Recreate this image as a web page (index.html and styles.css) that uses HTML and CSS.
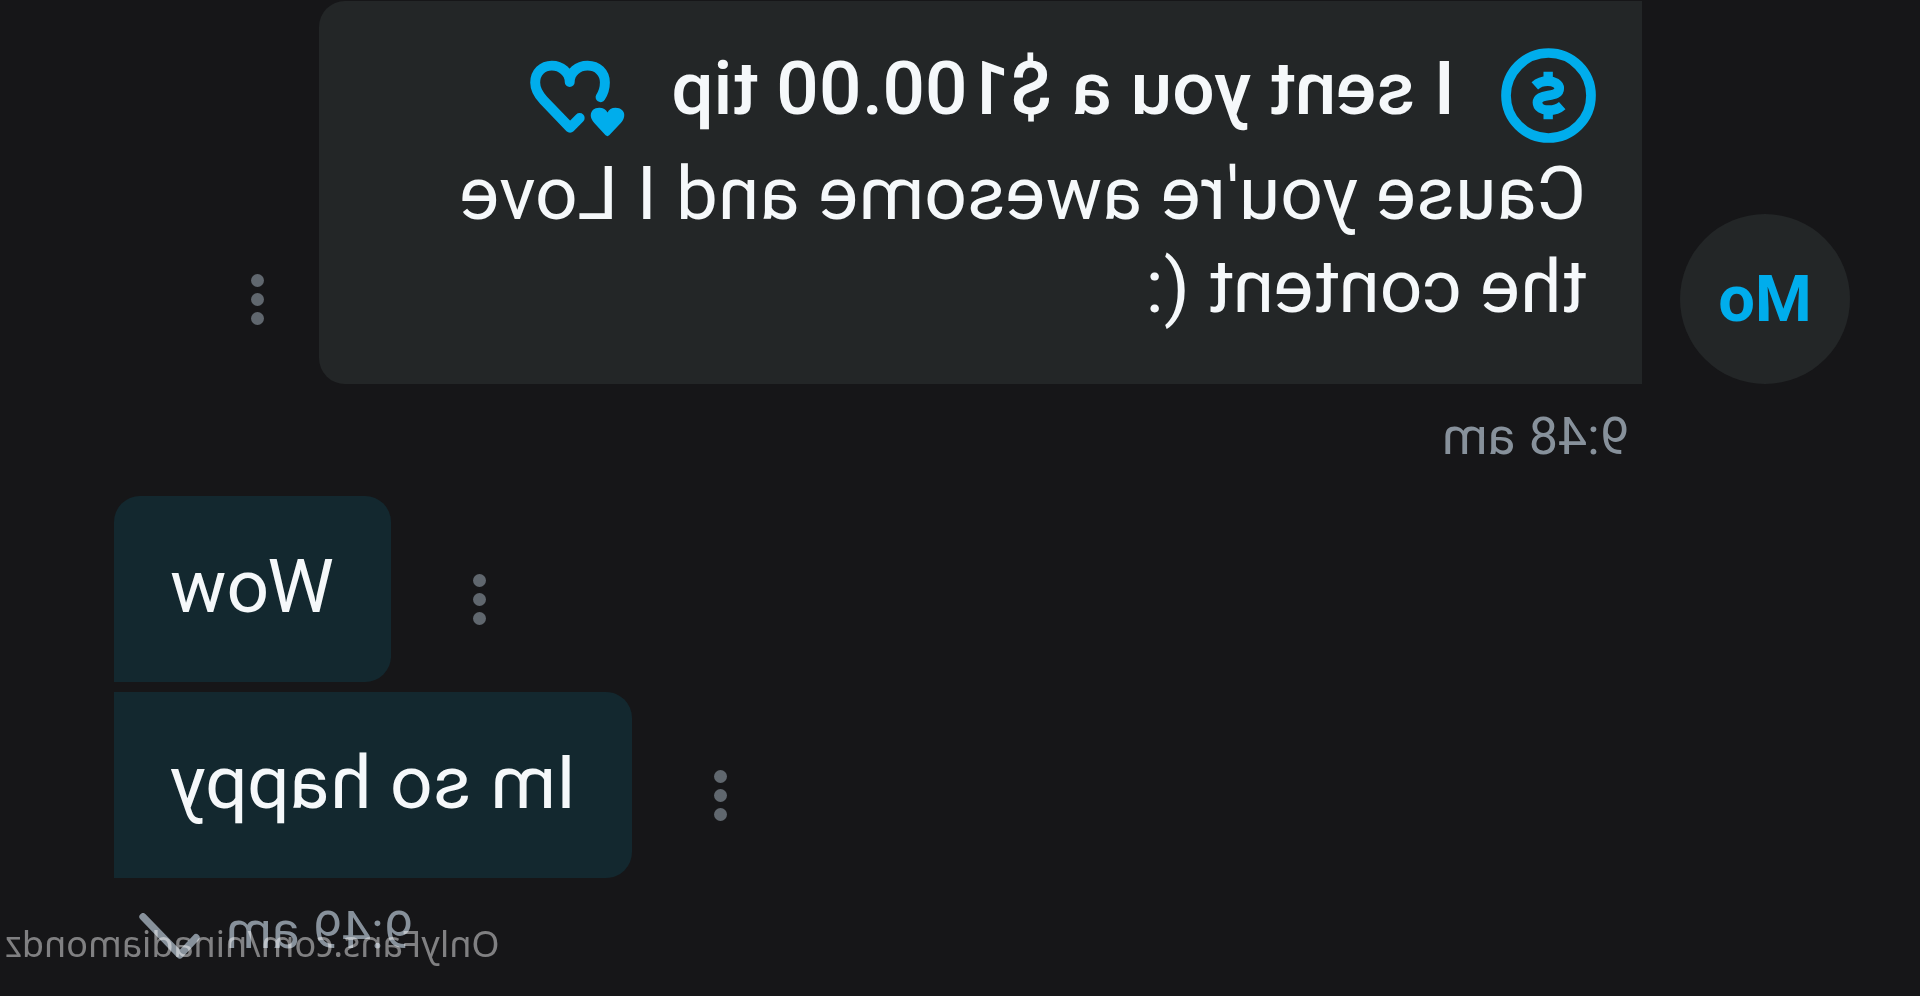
FILE: index.html
```html
<!DOCTYPE html>
<html lang="en">
<head>
<meta charset="utf-8">
<title>Messages</title>
<link rel="stylesheet" href="styles.css">
</head>
<body>
<main class="chat">
  <section class="row received">
    <div class="avatar">Mo</div>
    <article class="bubble">
      <header class="tip">
        <svg class="tip-coin" viewBox="0 0 284 284" fill="none" stroke="currentColor" aria-hidden="true">
          <circle cx="142" cy="142" r="127" stroke-width="29"/>
          <path stroke-width="29" d="M183 113C173 104 160 99 144 99C125 99 110 108 110 121C110 136 124 139 143 142C162 145 175 149 175 163C175 178 160 186 141 186C125 186 111 181 101 172"/>
          <path stroke-width="28" d="M143 71V98M143 186V213"/>
        </svg>
        <strong class="tip-text">I sent you a $100.00 tip</strong>
        <svg class="tip-heart" viewBox="0 0 288 232" fill="none" aria-hidden="true">
          <path stroke="currentColor" stroke-width="30" stroke-linecap="round" stroke-linejoin="round" d="M136 175L165 204L245 121C262 103 270 88 270 68C270 37 248 17 220 17C192 17 166 38 166 66C166 38 142 17 112 17C82 17 60 38 60 68C60 88 64 98 73 112"/>
          <path fill="currentColor" d="M47 227L12 190C-8 168 3 144 28 144C40 144 48 150 52 158C57 150 65 144 77 144C102 144 112 168 92 190L58 227Q52 232 47 227Z"/>
        </svg>
      </header>
      <p class="text">Cause you're awesome and I Love the content (:</p>
    </article>
    <button class="menu" type="button" aria-label="Message options"><i></i><i></i><i></i></button>
  </section>
  <div class="meta meta-received"><time>9:48 am</time></div>

  <section class="row sent">
    <button class="menu" type="button" aria-label="Message options"><i></i><i></i><i></i></button>
    <article class="bubble first"><p class="text">Wow</p></article>
  </section>
  <section class="row sent">
    <button class="menu" type="button" aria-label="Message options"><i></i><i></i><i></i></button>
    <article class="bubble"><p class="text">Im so happy</p></article>
  </section>
  <div class="meta meta-sent">
    <time>9:49 am</time>
    <svg class="check" viewBox="0 0 184 138" fill="none" stroke="currentColor" stroke-width="22" stroke-linecap="round" stroke-linejoin="round" aria-label="Sent"><path d="M12 74L61 126L172 11"/></svg>
  </div>
  <div class="watermark">OnlyFans.com/ninadiamondz</div>
</main>
</body>
</html>
```
FILE: styles.css
```css
* {
  box-sizing: border-box;
}

body {
  margin: 0;
  background: #161618;
  color: #f5f8fa;
  font-family: Roboto, sans-serif;
}

/* The whole conversation is shown flipped left to right. */
.chat {
  position: relative;
  min-height: 100vh;
  padding-top: 1px;
  transform: scaleX(-1);
  overflow: hidden;
}

.row {
  display: flex;
  align-items: flex-end;
}

.received {
  padding: 0 251px 0 70px;
}

.sent {
  justify-content: flex-end;
  padding-right: 114px;
  margin-bottom: 10px;
}

.avatar {
  display: flex;
  flex: none;
  align-items: center;
  justify-content: center;
  width: 170px;
  height: 170px;
  margin-right: 38px;
  border-radius: 50%;
  background: #232627;
  color: #00adec;
  font-size: 65px;
  font-weight: 700;
}

.bubble {
  padding: 44px 56px 51px;
}

.received .bubble {
  flex: 1;
  border-radius: 0 26px 26px 0;
  background: #232627;
}

.sent .bubble {
  padding-bottom: 49px;
  border-radius: 26px 0 0 26px;
  background: #13282f;
}

.sent .first {
  border-top-right-radius: 26px;
}

.text {
  margin: 0;
  font-size: 75px;
  line-height: 93px;
}

.tip {
  display: flex;
  align-items: flex-start;
  height: 102px;
  margin-left: -10px;
}

.tip-coin {
  flex: none;
  width: 95px;
  height: 95px;
  margin-top: 3px;
  color: #00adec;
}

.tip-text {
  margin: 0 46px;
  font-size: 75px;
  font-weight: 500;
  line-height: 86px;
  white-space: nowrap;
}

.tip-heart {
  flex: none;
  width: 96px;
  height: 77px;
  margin-top: 15px;
  color: #00adec;
}

.menu {
  display: flex;
  flex: none;
  flex-direction: column;
  gap: 6px;
  margin: 0 0 59px 55px;
  padding: 0;
  border: 0;
  background: none;
}

.sent .menu {
  margin: 0 82px 57px 0;
}

.menu i {
  width: 13px;
  height: 13px;
  border-radius: 50%;
  background: #60676e;
}

.meta {
  display: flex;
  align-items: flex-start;
  color: #87919b;
  font-size: 52px;
  line-height: 61px;
}

.meta-received {
  padding: 22px 0 29px 291px;
}

.meta-sent {
  justify-content: flex-end;
  gap: 26px;
  margin-top: -10px;
  padding: 22px 139px 0 0;
}

.check {
  width: 61px;
  height: 46px;
  margin-top: 13px;
}

.watermark {
  position: absolute;
  right: 5px;
  bottom: 27px;
  color: rgba(255, 255, 255, 0.46);
  font-family: "Noto Sans", sans-serif;
  font-size: 36px;
  line-height: 50px;
}
```
